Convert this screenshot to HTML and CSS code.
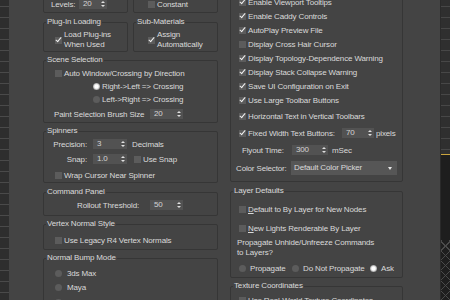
FILE: index.html
```html
<!DOCTYPE html>
<html lang="en">
  <head>
    <meta charset="UTF-8">
    <title>Preference Settings</title>
    <link rel="stylesheet" href="styles.css">
  </head>
  <body>
    <div class="screen">
      <div class="rail"></div>

      <div class="dialog">
        <!-- left column -->
        <div class="col col-left">
          <div class="pair">
            <fieldset class="grp g-top">
              <div class="ln pl7"><span class="lbl w28">Levels:</span><span class="spin w28">20</span></div>
            </fieldset>
            <fieldset class="grp g-top">
              <div class="ln pl14"><span class="cb"></span>Constant</div>
            </fieldset>
          </div>

          <div class="pair mt4">
            <fieldset class="grp g-plug">
              <legend>Plug-In Loading</legend>
              <div class="ln2 pl11"><span class="cb on"></span><span>Load Plug-ins<br>When Used</span></div>
            </fieldset>
            <fieldset class="grp g-plug">
              <legend>Sub-Materials</legend>
              <div class="ln2 pl14"><span class="cb on"></span><span>Assign<br>Automatically</span></div>
            </fieldset>
          </div>

          <fieldset class="grp g-scene mt3">
            <legend>Scene Selection</legend>
            <div class="ln h13 pl11"><span class="cb"></span>Auto Window/Crossing by Direction</div>
            <div class="ln h13 pl49"><span class="rb on"></span>Right-&gt;Left =&gt; Crossing</div>
            <div class="ln h13 pl49"><span class="rb"></span>Left-&gt;Right =&gt; Crossing</div>
            <div class="ln h16 pl10"><span class="lbl w96">Paint Selection Brush Size</span><span class="spin w33">20</span></div>
          </fieldset>

          <fieldset class="grp g-spin mt3">
            <legend>Spinners</legend>
            <div class="ln pl9"><span class="lbl w40 ra">Precision:</span><span class="spin w34">3</span><span class="ml5">Decimals</span></div>
            <div class="ln pl9 mt1"><span class="lbl w40 ra">Snap:</span><span class="spin w34">1.0</span><span class="cb ml7"></span>Use Snap</div>
            <div class="ln pl11 mt2"><span class="cb"></span>Wrap Cursor Near Spinner</div>
          </fieldset>

          <fieldset class="grp g-cmd mt4">
            <legend>Command Panel</legend>
            <div class="ln pl33"><span class="lbl w73">Rollout Threshold:</span><span class="spin w33">50</span></div>
          </fieldset>

          <fieldset class="grp g-vert mt3">
            <legend>Vertex Normal Style</legend>
            <div class="ln h13 pl11"><span class="cb"></span>Use Legacy R4 Vertex Normals</div>
          </fieldset>

          <fieldset class="grp g-bump mt3">
            <legend>Normal Bump Mode</legend>
            <div class="ln h145 pl11"><span class="rb mr5"></span>3ds Max</div>
            <div class="ln h145 pl11"><span class="rb mr5"></span>Maya</div>
            <div class="ln h145 pl11"><span class="rb mr5"></span>DirectX</div>
          </fieldset>
        </div>

        <!-- right column -->
        <div class="col col-right">
          <fieldset class="grp g-ui">
            <div class="ln pl8"><span class="cb on"></span>Enable Viewport Tooltips</div>
            <div class="ln pl8"><span class="cb on"></span>Enable Caddy Controls</div>
            <div class="ln pl8"><span class="cb on"></span>AutoPlay Preview File</div>
            <div class="ln pl8"><span class="cb"></span>Display Cross Hair Cursor</div>
            <div class="ln pl8"><span class="cb on"></span>Display Topology-Dependence Warning</div>
            <div class="ln pl8"><span class="cb on"></span>Display Stack Collapse Warning</div>
            <div class="ln pl8"><span class="cb on"></span>Save UI Configuration on Exit</div>
            <div class="ln pl8"><span class="cb on"></span>Use Large Toolbar Buttons</div>
            <div class="ln pl8 mt2"><span class="cb on"></span>Horizontal Text in Vertical Toolbars</div>
            <div class="ln pl8 mt3"><span class="cb on"></span><span class="lbl w94">Fixed Width Text Buttons:</span><span class="spin w32">70</span><span class="ml2">pixels</span></div>
            <div class="ln pl11 mt3"><span class="lbl w50">Flyout Time:</span><span class="spin w36">300</span><span class="ml4">mSec</span></div>
            <div class="ln h16 pl5 mt3"><span class="lbl w55">Color Selector:</span><span class="drop">Default Color Picker</span></div>
          </fieldset>

          <fieldset class="grp g-layer mt4">
            <legend>Layer Defaults</legend>
            <div class="ln pl8"><span class="cb"></span><span><u>D</u>efault to By Layer for New Nodes</span></div>
            <div class="ln pl8 mt5"><span class="cb"></span><span><u>N</u>ew Lights Renderable By Layer</span></div>
            <p class="note">Propagate Unhide/Unfreeze Commands<br>to Layers?</p>
            <div class="ln h13 pl8 mt5">
              <span class="opt w53"><span class="rb mr4"></span>Propagate</span>
              <span class="opt w78"><span class="rb mr4"></span>Do Not Propagate</span>
              <span class="opt"><span class="rb mr4 on"></span>Ask</span>
            </div>
          </fieldset>

          <fieldset class="grp g-tex mt3">
            <legend>Texture Coordinates</legend>
            <div class="ln pl8"><span class="cb"></span>Use Real-World Texture Coordinates</div>
          </fieldset>
        </div>
      </div>

      <div class="side">
        <div class="side-top"></div>
        <div class="side-vp"></div>
      </div>
    </div>
  </body>
</html>
```

FILE: styles.css
```css
* {
  box-sizing: border-box;
}

body {
  margin: 0;
  width: 450px;
  height: 300px;
  overflow: hidden;
  background: #444444;
  font-family: "Liberation Sans", Arial, sans-serif;
  font-size: 8px;
  letter-spacing: -0.15px;
  color: #dadada;
}

.screen {
  display: flex;
  height: 300px;
}

/* --------------- side strips ----------------- */

.rail {
  width: 9px;
  flex: none;
  background: repeating-linear-gradient(to bottom, #2e2e2e 0 10px, #4a4a4a 10px 11px);
  background-position: 0 -4px;
}

.side {
  width: 10px;
  flex: none;
  display: flex;
  flex-direction: column;
  border-left: 1px solid #2a2a2a;
}

.side-top {
  height: 154px;
  background: repeating-linear-gradient(to bottom, #2f2f2f 0 10px, #474747 10px 11px);
  background-position: 0 -4px;
}

.side-vp {
  flex: 1;
  border-top: 1px solid #c9a43e;
  background-color: #1e1e1e;
  background-image:
    repeating-linear-gradient(45deg, transparent 0 6px, #4a4a4a 6px 7px),
    repeating-linear-gradient(-45deg, transparent 0 6px, #4a4a4a 6px 7px);
  background-size: 100% 60px;
  background-position: 0 100%;
  background-repeat: no-repeat;
}

/* --------------- dialog ----------------- */

.dialog {
  flex: 1;
  display: flex;
  gap: 12px;
  padding-left: 34px;
  background: #444444;
}

.col {
  display: flex;
  flex-direction: column;
}

.col-left {
  width: 175px;
  margin-top: -4px;
}

.col-right {
  width: 173px;
  margin-top: -6px;
}

.pair {
  display: flex;
  gap: 5px;
}

.pair > .grp {
  flex: 1;
}

.grp {
  margin: 0;
  padding: 0;
  min-width: 0;
  border: 1px solid #363636;
  border-radius: 2px;
}

.grp legend {
  margin-left: 2px;
  padding: 0 1px;
  line-height: 10px;
}

.g-top { padding-bottom: 1px; }
.g-plug { padding: 3px 0 1px; }
.g-scene { padding-top: 2px; }
.g-spin { padding-top: 1px; }
.g-cmd { padding: 1px 0 3px; }
.g-vert { padding: 5px 0 2px; }
.g-bump { padding: 3px 0 20px; }
.g-ui { padding-bottom: 5px; }
.g-layer { padding: 6px 0 2px; }
.g-tex { padding: 2px 0 20px; }

/* --------------- rows ----------------- */

.ln {
  display: flex;
  align-items: center;
  height: 14px;
  white-space: nowrap;
}

.ln2 {
  display: flex;
  align-items: center;
  line-height: 10px;
  white-space: nowrap;
}

.h13 { height: 13px; }
.h145 { height: 14.5px; }
.h16 { height: 16px; }

.pl5 { padding-left: 5px; }
.pl7 { padding-left: 7px; }
.pl8 { padding-left: 8px; }
.pl9 { padding-left: 9px; }
.pl10 { padding-left: 10px; }
.pl11 { padding-left: 11px; }
.pl14 { padding-left: 14px; }
.pl33 { padding-left: 33px; }
.pl49 { padding-left: 49px; }

.mt1 { margin-top: 1px; }
.mt2 { margin-top: 2px; }
.mt3 { margin-top: 3px; }
.mt4 { margin-top: 4px; }
.mt5 { margin-top: 5px; }

.ml2 { margin-left: 2px; }
.ml4 { margin-left: 4px; }
.ml5 { margin-left: 5px; }
.ml7 { margin-left: 7px; }

.lbl {
  flex: none;
}

.ra {
  text-align: right;
  padding-right: 6px;
}

.w28 { width: 28px; }
.w32 { width: 32px; }
.w33 { width: 33px; }
.w34 { width: 34px; }
.w36 { width: 36px; }
.w40 { width: 40px; }
.w50 { width: 50px; }
.w53 { width: 53px; }
.w55 { width: 55px; }
.w73 { width: 73px; }
.w78 { width: 78px; }
.w94 { width: 94px; }
.w96 { width: 96px; }

.note {
  margin: 3px 0 0;
  padding-left: 6px;
  line-height: 9.5px;
}

.opt {
  display: flex;
  align-items: center;
  flex: none;
}

u {
  text-underline-offset: 1px;
}

/* --------------- controls ----------------- */

.cb {
  position: relative;
  flex: none;
  width: 7px;
  height: 7px;
  margin-right: 2px;
  background: #5c5c5c;
}

.cb.on::after {
  content: "";
  position: absolute;
  left: 2px;
  top: -1px;
  width: 2px;
  height: 5px;
  border: solid #f2f2f2;
  border-width: 0 1.5px 1.5px 0;
  transform: rotate(40deg);
}

.rb {
  flex: none;
  width: 7px;
  height: 7px;
  margin-right: 2px;
  border-radius: 50%;
  background: #5c5c5c;
}

.rb.on {
  background: radial-gradient(circle, #ffffff 0 1.6px, #dcdcdc 2.4px, #9c9c9c 3.5px);
}

.mr4 { margin-right: 4px; }
.mr5 { margin-right: 5px; }

.spin {
  position: relative;
  flex: none;
  height: 10px;
  line-height: 10px;
  padding-left: 4px;
  background: #525252;
  color: #d4d4d4;
}

.spin::before,
.spin::after {
  content: "";
  position: absolute;
  right: 2px;
  border-left: 2px solid transparent;
  border-right: 2px solid transparent;
}

.spin::before {
  top: 2px;
  border-bottom: 2px solid #e0e0e0;
}

.spin::after {
  bottom: 2px;
  border-top: 2px solid #e0e0e0;
}

.drop {
  position: relative;
  flex: none;
  width: 106px;
  height: 14px;
  line-height: 14px;
  padding-left: 3px;
  background: #565656;
}

.drop::after {
  content: "";
  position: absolute;
  right: 5px;
  top: 6px;
  border-left: 2.5px solid transparent;
  border-right: 2.5px solid transparent;
  border-top: 3px solid #e6e6e6;
}
```
